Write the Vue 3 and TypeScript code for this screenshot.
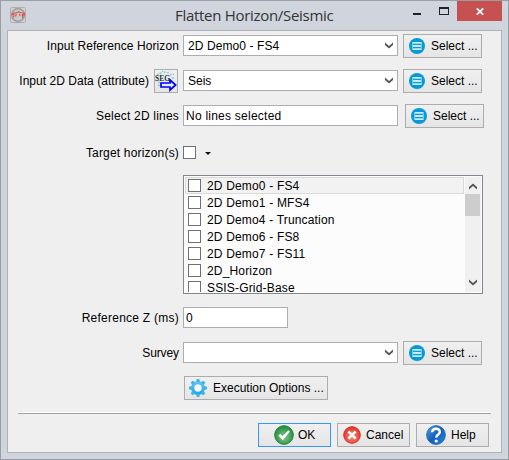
<script setup lang="ts">
import { ref } from 'vue'

const horizons = ref<string[]>([
  '2D Demo0 - FS4',
  '2D Demo1 - MFS4',
  '2D Demo4 - Truncation',
  '2D Demo6 - FS8',
  '2D Demo7 - FS11',
  '2D_Horizon',
  'SSIS-Grid-Base',
])

interface FieldRow {
  label: string
  value: string
  combo: boolean
  seg: boolean
}
const inputs: FieldRow[] = [
  { label: 'Input Reference Horizon', value: '2D Demo0 - FS4', combo: true, seg: false },
  { label: 'Input 2D Data (attribute)', value: 'Seis', combo: true, seg: true },
  { label: 'Select 2D lines', value: 'No lines selected', combo: false, seg: false },
]
const teeth: number[] = [0, 45, 90, 135, 180, 225, 270, 315]
</script>

<template>
  <div class="window">
    <svg class="defs" width="0" height="0" aria-hidden="true">
      <defs>
        <linearGradient id="gear" x1="0" y1="0" x2="0" y2="18" gradientUnits="userSpaceOnUse">
          <stop offset="0" stop-color="#74cff8" /><stop offset="1" stop-color="#0f9fdf" />
        </linearGradient>
        <radialGradient id="green" cx=".5" cy=".6" r=".6">
          <stop offset="0" stop-color="#8cc793" /><stop offset=".6" stop-color="#45a156" /><stop offset="1" stop-color="#1d8a3c" />
        </radialGradient>
        <radialGradient id="red" cx=".5" cy=".6" r=".6">
          <stop offset="0" stop-color="#f6907f" /><stop offset="1" stop-color="#e52d20" />
        </radialGradient>
        <linearGradient id="blue" x1="0" y1="0" x2="1" y2="1">
          <stop offset="0" stop-color="#5e9fe0" /><stop offset=".5" stop-color="#1560bd" /><stop offset="1" stop-color="#2a86dc" />
        </linearGradient>
        <symbol id="menu" viewBox="0 0 16 16">
          <circle cx="8" cy="8" r="8" fill="#069bd8" />
          <path d="M4 4h8v1.7H4zM4 7.1h8v1.8H4zM4 10.3h8V12H4z" fill="#c9ecf9" />
          <path d="M3.6 4v8M12.4 4v8" stroke="#7fd0ef" stroke-width="1" />
        </symbol>
        <symbol id="down" viewBox="0 0 8 7">
          <path d="M0 0.5v2.4L4 6.6 8 2.9V.5L4 4z" fill="#555" />
        </symbol>
      </defs>
    </svg>

    <header class="titlebar">
      <svg class="app-icon" width="16" height="16" viewBox="0 0 16 16">
        <rect x=".5" y=".5" width="15" height="15" rx="1" fill="#d0d0d0" stroke="#b2aeae" />
        <circle cx="8" cy="8" r="6.4" fill="#c5caca" stroke="#999" stroke-width="1.2" />
        <path d="M1.5 8L4 5.8l2 .2 2.5-1.2 2.5 1 3.3.2v1.8l-2-.2.6 3.4M4 7l-.6 3.5M6.2 7l-.6 2.6M9 7l1.4 1.6" fill="none" stroke="#e24a46" stroke-width="1.1" />
      </svg>
      <h1 class="title">Flatten Horizon/Seismic</h1>
      <div class="controls">
        <svg width="45" height="20" viewBox="0 0 45 20"><path d="M1 12h8v2H1z" fill="#222" /><path d="M27 6h10v8H27z" fill="#222" /><path d="M28 8h8v5h-8z" fill="#d0d5dd" /></svg>
        <svg class="close" width="45" height="20" viewBox="0 0 45 20"><path d="M19.8 7.3l6.4 6.4M26.2 7.3l-6.4 6.4" stroke="#fff" stroke-width="1.8" /></svg>
      </div>
    </header>

    <main class="client">
      <div v-for="(row, i) in inputs" :key="row.label" class="row" :class="'input-' + i">
        <div class="label" :class="{ 'with-seg': row.seg }">
          <span>{{ row.label }}</span>
          <button v-if="row.seg" class="btn seg">
            <svg width="22" height="22" viewBox="0 0 22 22">
              <path d="M2 5l3-2M5 4l3-3M9 3l2-2M12 3l3-1M15 5l4-1M17 8l3 0M5 13l-3-2M3 15l2 1" stroke="#8bc7dd" stroke-width="1.4" stroke-dasharray="2 1" />
              <text x="0" y="11" class="seg-text" textLength="15" lengthAdjust="spacingAndGlyphs">SEG</text>
              <path d="M6 13h9v-3l5.6 5-5.6 5v-3H6z" fill="#e8eef5" stroke="#0000ff" stroke-width="1.7" />
            </svg>
          </button>
        </div>
        <div class="field" :class="{ combo: row.combo }">
          <span>{{ row.value }}</span>
          <svg v-if="row.combo" width="8" height="7"><use href="#down" /></svg>
        </div>
        <button class="btn select" :class="{ shifted: !row.combo }">
          <svg width="16" height="16"><use href="#menu" /></svg><span>Select ...</span>
        </button>
      </div>

      <div class="row target">
        <div class="label"><span>Target horizon(s)</span></div>
        <i class="check"></i>
        <svg class="caret" width="6" height="3" viewBox="0 0 6 3"><path d="M0 0h6L3 3z" fill="#111" /></svg>
      </div>

      <div class="list">
        <ul class="items">
          <li v-for="(name, i) in horizons" :key="name" :class="{ current: i === 0 }">
            <i class="check"></i><span>{{ name }}</span>
          </li>
        </ul>
        <div class="scrollbar">
          <svg class="up" width="8" height="7"><use href="#down" /></svg>
          <div class="thumb"></div>
          <svg class="down" width="8" height="7"><use href="#down" /></svg>
        </div>
      </div>

      <div class="row ref-z">
        <div class="label"><span>Reference Z (ms)</span></div>
        <div class="field short"><span>0</span></div>
      </div>

      <div class="row survey">
        <div class="label"><span>Survey</span></div>
        <div class="field combo"><span></span><svg width="8" height="7"><use href="#down" /></svg></div>
        <button class="btn select">
          <svg width="16" height="16"><use href="#menu" /></svg><span>Select ...</span>
        </button>
      </div>

      <button class="btn exec">
        <svg width="18" height="18" viewBox="0 0 18 18">
          <circle cx="9" cy="9" r="3.6" fill="#f6f8f9" />
          <circle cx="9" cy="9" r="5.3" fill="none" stroke="url(#gear)" stroke-width="3.2" />
          <g fill="#3db6ea">
            <path v-for="a in teeth" :key="a" d="M7 3L7.7 0h2.6L11 3z" :transform="`rotate(${a} 9 9)`" />
          </g>
        </svg>
        <span>Execution Options ...</span>
      </button>

      <div class="separator"></div>

      <footer class="actions">
        <button class="btn ok">
          <svg width="20" height="20" viewBox="0 0 20 20">
            <circle cx="10" cy="10" r="9.3" fill="url(#green)" stroke="#188139" stroke-width="1" />
            <path d="M4.3 10.5l2-1.6 2.4 2.4 5.7-6 1.5 1.4-7.2 8.5z" fill="#fff" />
          </svg><span>OK</span>
        </button>
        <button class="btn cancel">
          <svg width="18" height="18" viewBox="0 0 18 18">
            <circle cx="9" cy="9" r="8.3" fill="url(#red)" stroke="#df2b20" stroke-width="1" />
            <path d="M5.3 5.3l7.4 7.4M12.7 5.3l-7.4 7.4" stroke="#fff" stroke-width="2.6" />
          </svg><span>Cancel</span>
        </button>
        <button class="btn help">
          <svg width="20" height="20" viewBox="0 0 20 20">
            <circle cx="10" cy="10" r="9.4" fill="url(#blue)" stroke="#1b5fae" stroke-width=".8" />
            <path d="M6.2 7.2C6.4 2.6 14 2.7 13.8 7c-.1 2.6-3.6 2.5-3.5 5.6" fill="none" stroke="#fff" stroke-width="2.5" />
            <circle cx="10.2" cy="16" r="1.6" fill="#fff" />
          </svg><span>Help</span>
        </button>
      </footer>
    </main>
  </div>
</template>

<style>
body { margin: 0; }
</style>

<style scoped>
* { box-sizing: border-box; }
.window {
  width: 509px; height: 460px; padding: 0 6px 6px;
  background: #d0d5dd; border: 1px solid #9b9da5;
  font: 12px/14px "Liberation Sans", Arial, sans-serif; color: #000;
  display: flex; flex-direction: column; overflow: hidden;
}
.defs { position: absolute; }
svg { display: block; flex: none; }
span { white-space: pre; }
.titlebar { height: 29px; flex: none; display: flex; align-items: flex-start; }
.app-icon { margin: 6px 0 0 3px; }
.title {
  margin: 4px 0 0; flex: 1; padding-left: 149px; white-space: nowrap;
  font: 400 15px/21px "Open Sans", "Noto Sans", sans-serif; color: #333; letter-spacing: -0.3px;
}
.controls { display: flex; }
.close { background: #c75050; }
.client {
  height: 423px; flex: none; background: #efefef; border: 1px solid #b0b2b8;
  padding-top: 3px; display: flex; flex-direction: column;
}
.row { display: flex; height: 24px; margin-bottom: 11px; align-items: flex-start; flex: none; }
.label { width: 171px; margin-right: 4px; height: 24px; display: flex; align-items: center; justify-content: flex-end; }
.with-seg { width: 170px; margin-right: 5px; gap: 5px; }
.input-0 .label, .input-0 .field { letter-spacing: 0.09px; }
.input-1 .label { letter-spacing: 0.04px; }
.input-2 .label { letter-spacing: 0.2px; }
.input-2 .field { letter-spacing: 0.24px; }
.target .label { letter-spacing: 0.18px; }
.ref-z .label { letter-spacing: 0.25px; }
.survey .label { letter-spacing: -0.1px; }
.field {
  width: 215px; height: 21px; margin-top: 1px; background: #fff; border: 1px solid #abadb3;
  display: flex; align-items: center; justify-content: space-between; padding: 0 2px;
}
.combo { padding: 0 4px; }
.short { width: 105px; margin-top: 0; }
.btn {
  height: 24px; margin: 0; padding: 0; border: 1px solid #acacac; border-radius: 0;
  background: linear-gradient(#f0f0f0, #e5e5e5); font: inherit; color: inherit;
  display: flex; align-items: center; flex: none;
}
.seg { width: 24px; }
.seg-text { font: bold 8px "Liberation Serif", serif; fill: #24323c; }
.select { width: 79px; margin-left: 5px; padding-left: 5px; gap: 6px; }
.shifted { margin-left: 7px; }
.target { height: 13px; margin: 7px 0 16px; }
.target .label { height: 14px; }
.check { width: 13px; height: 13px; background: #fff; border: 1px solid #707070; flex: none; }
.caret { margin: 6px 0 0 9px; }
.list {
  width: 300px; height: 119px; margin-left: 175px; flex: none; border: 1px solid #828790;
  background: #fcfcfc; padding: 1px; display: flex;
}
.items { margin: 0; padding: 0; list-style: none; width: 279px; height: 115px; overflow: hidden; letter-spacing: 0.17px; }
.items li { height: 17px; padding-left: 3px; display: flex; align-items: center; gap: 6px; }
.items li.current { background: #f2f2f2; border: 1px solid #dadada; padding-left: 2px; }
.scrollbar { width: 16px; margin-left: 1px; background: #f0f0f0; display: flex; flex-direction: column; }
.up { transform: rotate(180deg); margin: 6px 0 4px 4px; }
.thumb { width: 15px; height: 22px; background: #cdcdcd; }
.down { margin: auto 0 6px 4px; }
.ref-z { height: 21px; margin: 13px 0; }
.ref-z .label { height: 21px; }
.exec { width: 144px; margin-left: 176px; padding-left: 4px; gap: 6px; }
.separator { width: 473px; height: 2px; margin: 12px 0 9px 10px; flex: none; background: #a0a0a0; border-top: 1px solid #fff; }
.actions { display: flex; gap: 6px; margin-left: 250px; }
.actions .btn { width: 73px; }
.actions .ok { border-color: #3399ff; padding-left: 15px; gap: 4px; }
.actions .cancel { padding-left: 5px; gap: 5px; }
.actions .help { padding-left: 9px; gap: 5px; }
</style>
